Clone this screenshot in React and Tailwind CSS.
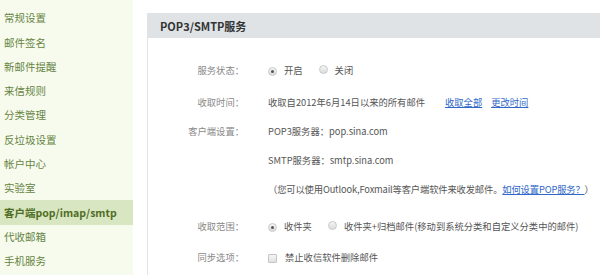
import React from "react";

const F = { fontFamily: '"Noto Sans CJK SC", "Noto Sans", sans-serif' };

const side = [
  "常规设置",
  "邮件签名",
  "新邮件提醒",
  "来信规则",
  "分类管理",
  "反垃圾设置",
  "帐户中心",
  "实验室",
  "客户端pop/imap/smtp",
  "代收邮箱",
  "手机服务",
];

function Radio({ checked }) {
  return (
    <span className="relative inline-flex h-[9px] w-[9px] shrink-0 items-center justify-center rounded-full border border-[#c9c9c9] bg-gradient-to-b from-[#f4f4f4] to-[#dcdcdc]">
      {checked && <span className="h-[3px] w-[3px] rounded-full bg-[#555]" />}
    </span>
  );
}

function Row({ label, children, className = "" }) {
  return (
    <div className={"flex h-[26px] items-center " + className}>
      <div className="w-[96px] shrink-0 text-right text-[#888]">{label}</div>
      <div className="ml-[24px] flex items-center text-[#555]">{children}</div>
    </div>
  );
}

export default function App() {
  return (
    <div className="flex h-[275px] w-[600px] overflow-hidden bg-white" style={F}>
      <div className="h-full w-[133px] shrink-0 bg-[#f7fbee] pt-[6px] text-[10.5px] text-[#668443]">
        {side.map((s, i) => (
          <div
            key={s}
            className={
              "flex h-[24.3px] items-center pl-[4px] " +
              (i === 8 ? "bg-[#d9e6c2] font-bold text-[#4f6e25]" : "")
            }
          >
            {s}
          </div>
        ))}
      </div>
      <div className="flex-1 pl-[14px] pt-[13px]">
        <div className="h-full border-l border-t border-[#e3e3e3] text-[9.3px]">
          <div className="flex h-[24px] items-center bg-[#dfe3e6] pl-[12px] text-[11px] font-bold text-[#333]">
            POP3/SMTP服务
          </div>
          <div className="pt-[20px]">
            <Row label="服务状态：">
              <Radio checked />
              <span className="ml-[7px]">开启</span>
              <span className="ml-[16px]"><Radio /></span>
              <span className="ml-[7px]">关闭</span>
            </Row>
            <Row label="收取时间：" className="mt-[6px]">
              <span>收取自2012年6月14日以来的所有邮件</span>
              <span className="ml-[20px] text-[#3168c8] underline">收取全部</span>
              <span className="ml-[9px] text-[#3168c8] underline">更改时间</span>
            </Row>
            <div className="mt-[1px] flex">
              <div className="flex h-[29px] w-[96px] shrink-0 items-center justify-end text-[#888]">
                客户端设置：
              </div>
              <div className="ml-[24px] flex flex-col text-[#555]">
                <div className="flex h-[29px] items-center">POP3服务器：pop.sina.com</div>
                <div className="flex h-[29px] items-center">SMTP服务器：smtp.sina.com</div>
                <div className="flex h-[29px] items-center whitespace-nowrap tracking-[-0.15px]">
                  （您可以使用Outlook,Foxmail等客户端软件来收发邮件。
                  <span className="text-[#3168c8] underline">如何设置POP服务？</span>）
                </div>
              </div>
            </div>
            <Row label="收取范围：" className="mt-[10px]">
              <Radio checked />
              <span className="ml-[7px]">收件夹</span>
              <span className="ml-[16px]"><Radio /></span>
              <span className="ml-[7px] whitespace-nowrap">收件夹+归档邮件(移动到系统分类和自定义分类中的邮件)</span>
            </Row>
            <Row label="同步选项：" className="mt-[5px]">
              <span className="h-[9px] w-[9px] shrink-0 rounded-[1px] border border-[#c4c4c4] bg-gradient-to-b from-[#f6f6f6] to-[#e0e0e0]" />
              <span className="ml-[8px]">禁止收信软件删除邮件</span>
            </Row>
          </div>
        </div>
      </div>
    </div>
  );
}
